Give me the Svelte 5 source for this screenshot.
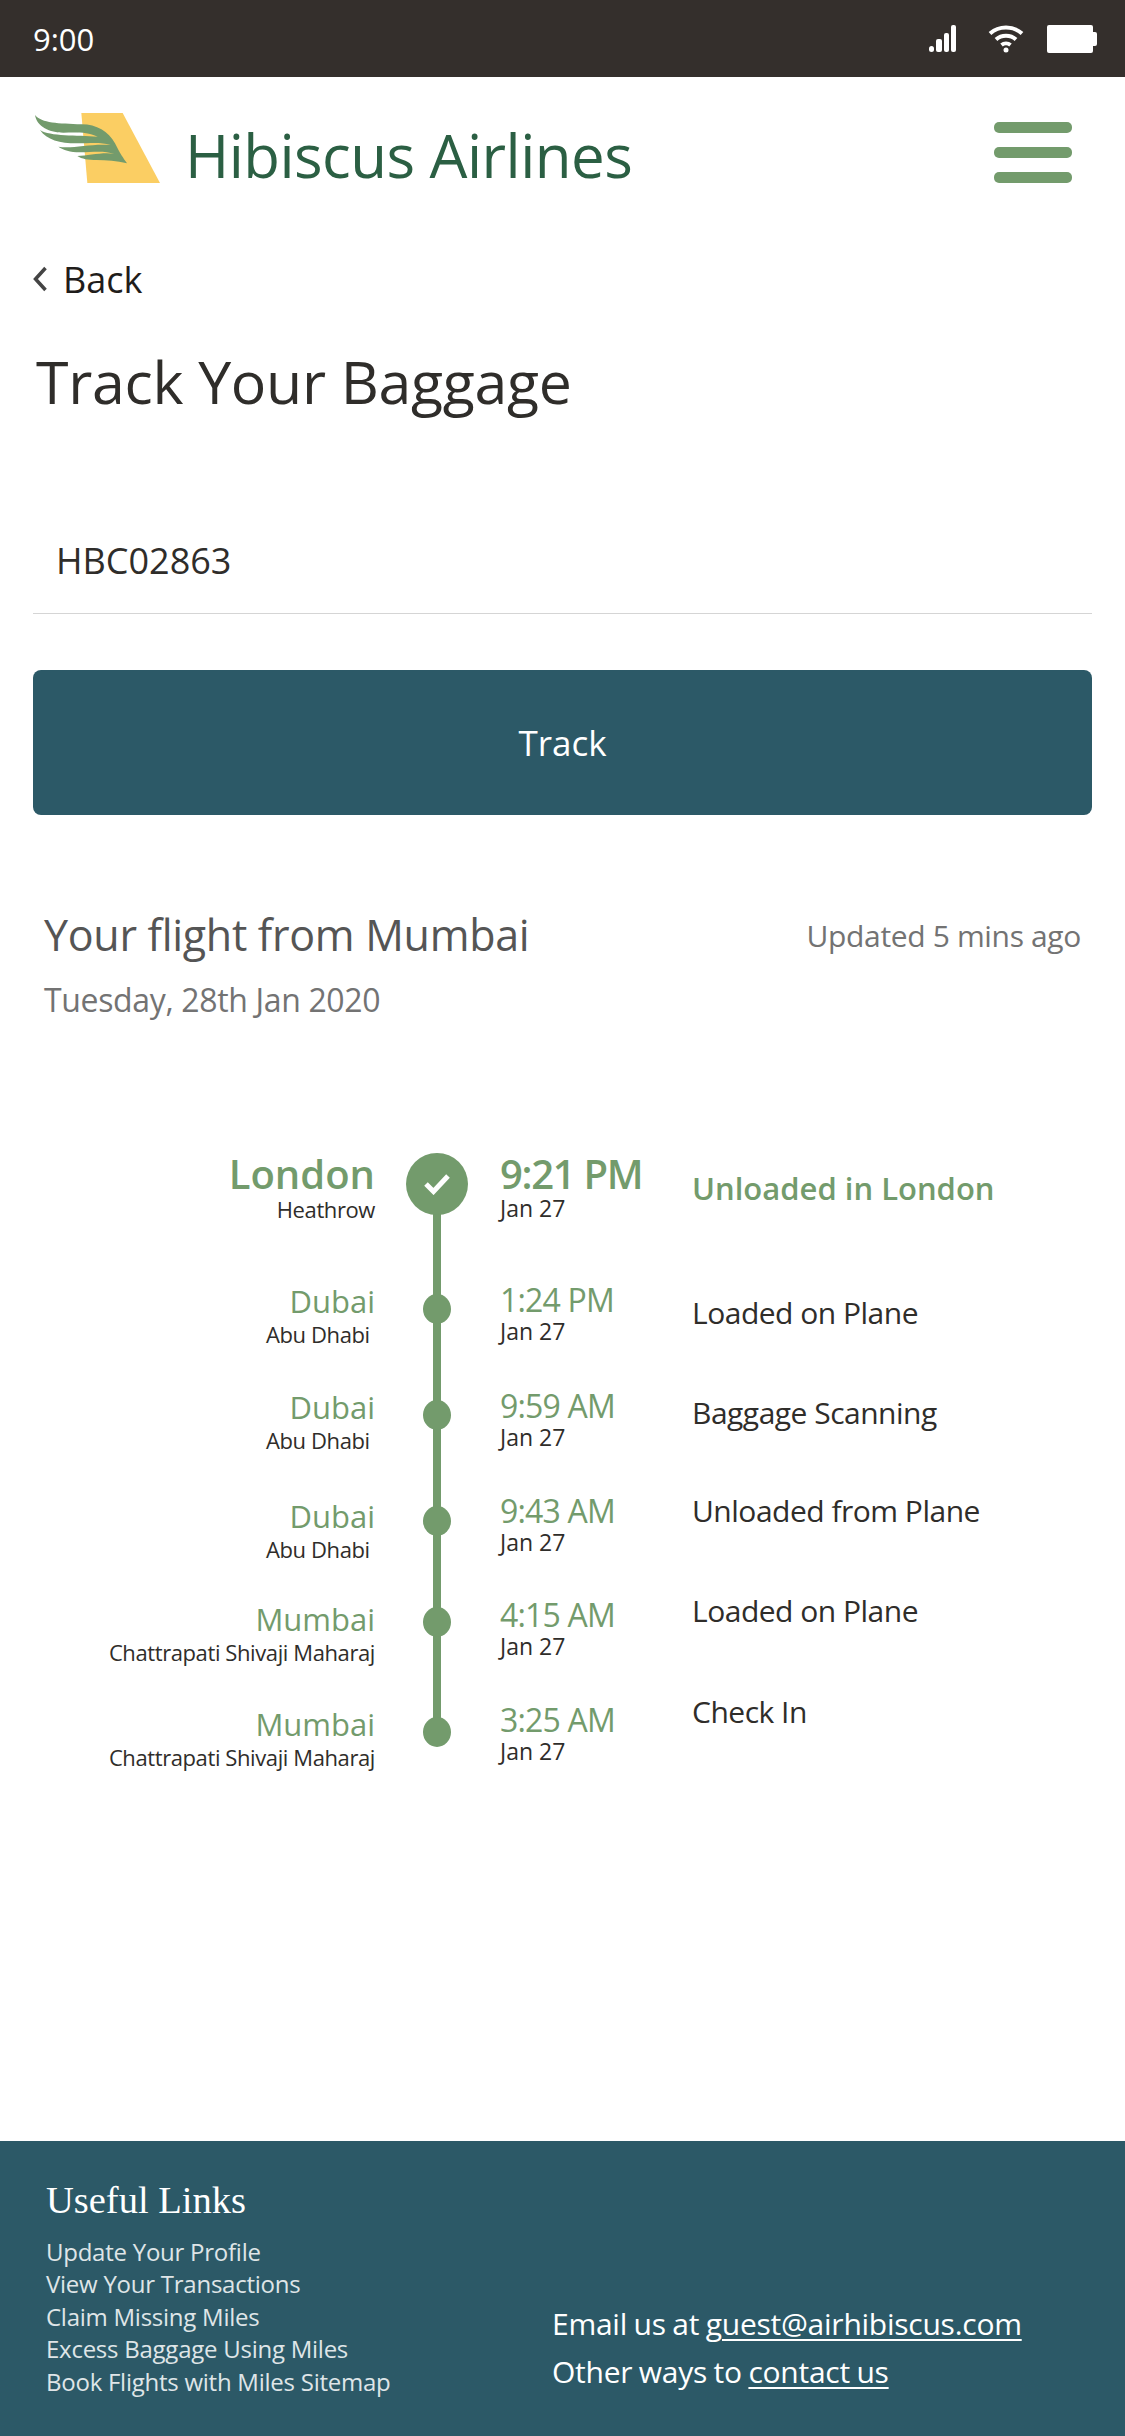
<script>
	const events = [
		{ city: 'London', place: 'Heathrow', time: '9:21 PM', date: 'Jan 27', status: 'Unloaded in London', current: true, height: 126, cityTop: 0, timeTop: 0, statusTop: 16 },
		{ city: 'Dubai', place: 'Abu Dhabi\u00a0', time: '1:24 PM', date: 'Jan 27', status: 'Loaded on Plane', height: 106, cityTop: 3, timeTop: 3, statusTop: 15 },
		{ city: 'Dubai', place: 'Abu Dhabi\u00a0', time: '9:59 AM', date: 'Jan 27', status: 'Baggage Scanning', height: 106, cityTop: 3, timeTop: 3, statusTop: 9 },
		{ city: 'Dubai', place: 'Abu Dhabi\u00a0', time: '9:43 AM', date: 'Jan 27', status: 'Unloaded from Plane', height: 101, cityTop: 6, timeTop: 2, statusTop: 1 },
		{ city: 'Mumbai', place: 'Chattrapati Shivaji Maharaj', time: '4:15 AM', date: 'Jan 27', status: 'Loaded on Plane', height: 110, cityTop: 8, timeTop: 5, statusTop: 0 },
		{ city: 'Mumbai', place: 'Chattrapati Shivaji Maharaj', time: '3:25 AM', date: 'Jan 27', status: 'Check In', height: 106, cityTop: 3, timeTop: 0, statusTop: -9 }
	];

	const links = [
		'Update Your Profile',
		'View Your Transactions',
		'Claim Missing Miles',
		'Excess Baggage Using Miles',
		'Book Flights with Miles Sitemap'
	];
</script>

<div class="page">
	<div class="statusbar">
		<span class="clock">9:00</span>
		<div class="status-icons">
			<svg width="28" height="28" viewBox="0 0 28 28" fill="#fff">
				<rect x="0" y="21" width="5" height="6" rx="2.5" />
				<rect x="7" y="14" width="6" height="13" rx="2" />
				<rect x="15" y="8" width="5" height="19" rx="2" />
				<rect x="22" y="0" width="5" height="27" rx="2" />
			</svg>
			<svg width="36" height="28" viewBox="0 0 36 28" fill="none" stroke="#fff" stroke-width="4">
				<path d="M2 8.500C11 0.500 25 0.500 34 8.500" />
				<path d="M8 14.500C13.500 9.500 22.500 9.500 28 14.500" />
				<path d="M13.500 20C16 18 20 18 22.500 20" />
				<circle cx="18" cy="25" r="2.500" fill="#fff" stroke="none" />
			</svg>
			<svg width="50" height="28" viewBox="0 0 50 28" fill="#fff">
				<rect x="0" y="0" width="46" height="28" rx="2" />
				<rect x="44" y="7" width="6" height="14" rx="2" />
			</svg>
		</div>
	</div>

	<header class="topbar">
		<div class="brand">
			<svg class="logo" width="126" height="70" viewBox="105 69 378 210">
				<path d="M244 69H368L480 279H262Z" fill="#fbce63" />
				<path
					fill="#739b6c"
					d="M105 75C125 100 175 100 245 103C290 103 325 125 345 160C360 190 370 205 381 220C350 212 320 210 290 210C265 210 245 207 232 198C265 198 310 185 343 192C310 180 275 187 240 187C210 187 190 180 175 170C215 178 270 160 332 165C300 155 270 160 230 160C180 160 140 150 120 120C150 140 230 135 293 140C260 125 230 128 190 128C150 128 110 110 105 75Z"
				/>
			</svg>
			<span class="brand-name">Hibiscus Airlines</span>
		</div>
		<div class="menu">
			<span></span>
			<span></span>
			<span></span>
		</div>
	</header>

	<main>
		<div class="back">
			<svg width="14" height="26" viewBox="0 0 14 26" fill="none" stroke="#444" stroke-width="3.500">
				<path d="M12.500 2L2.500 13L12.500 24" />
			</svg>
			<span>Back</span>
		</div>
		<h1>Track Your Baggage</h1>

		<div class="field">HBC02863</div>
		<button class="track">Track</button>

		<section class="flight">
			<div class="flight-head">
				<h2>Your flight from Mumbai</h2>
				<span class="updated">Updated 5 mins ago</span>
			</div>
			<div class="flight-date">Tuesday, 28th Jan 2020</div>
		</section>

		<div class="timeline">
			<div class="rail"></div>
			{#each events as e}
				<div class="row" class:current={e.current} style="height: {e.height}px">
					<div class="where" style="padding-top: {e.cityTop}px">
						<div class="city">{e.city}</div>
						<div class="sub">{e.place}</div>
					</div>
					<div class="node">
						{#if e.current}
							<div class="big-dot">
								<svg width="26" height="22" viewBox="0 0 26 22" fill="none" stroke="#fff" stroke-width="5">
									<path d="M2 11L9.500 18.500L24 3" />
								</svg>
							</div>
						{:else}
							<div class="dot"></div>
						{/if}
					</div>
					<div class="when" style="padding-top: {e.timeTop}px">
						<div class="time">{e.time}</div>
						<div class="date">{e.date}</div>
					</div>
					<div class="status" style="margin-top: {e.statusTop}px">{e.status}</div>
				</div>
			{/each}
		</div>
	</main>

	<footer>
		<div class="useful">
			<h3>Useful Links</h3>
			{#each links as link}
				<div class="link">{link}</div>
			{/each}
		</div>
		<div class="contact">
			<div>Email us at <u>guest@airhibiscus.com</u></div>
			<div>Other ways to <u>contact us</u></div>
		</div>
	</footer>
</div>

<style>
	:global(body) {
		margin: 0;
		background: #fff;
	}

	.page {
		width: 1125px;
		height: 2436px;
		display: flex;
		flex-direction: column;
		font-family: 'Open Sans', sans-serif;
		color: #2f2d2a;
	}

	.statusbar {
		height: 77px;
		flex: none;
		background: #342f2c;
		display: flex;
		justify-content: space-between;
		align-items: center;
		padding: 0 28px 0 33px;
		box-sizing: border-box;
		color: #fff;
	}

	.clock {
		font-size: 31px;
	}

	.status-icons {
		display: flex;
		align-items: center;
		gap: 23px;
		margin-top: 1px;
	}

	.status-icons svg:first-child {
		margin-right: 8px;
	}

	.topbar {
		display: flex;
		justify-content: space-between;
		align-items: flex-start;
		padding: 36px 53px 0 35px;
		height: 115px;
		flex: none;
		box-sizing: border-box;
	}

	.brand {
		display: flex;
		align-items: flex-start;
		gap: 24px;
	}

	.brand-name {
		font-size: 60px;
		line-height: 84px;
		letter-spacing: -0.55px;
		color: #2b5f43;
	}

	.menu {
		display: flex;
		flex-direction: column;
		gap: 14px;
		padding-top: 9px;
	}

	.menu span {
		display: block;
		width: 78px;
		height: 11px;
		border-radius: 5px;
		background: #739b6c;
	}

	main {
		flex: 1;
		padding: 0 33px;
	}

	.back {
		display: flex;
		align-items: center;
		gap: 16px;
		font-size: 36px;
		margin-top: 61px;
		height: 52px;
	}

	.back span {
		color: #1f1d1b;
	}

	h1 {
		margin: 36px 0 0 3px;
		font-size: 59px;
		line-height: 80px;
		font-weight: 400;
		letter-spacing: -0.3px;
	}

	.field {
		margin-top: 115px;
		height: 77px;
		padding-left: 23px;
		font-size: 36px;
		line-height: 50px;
		border-bottom: 1px solid #d5d5d5;
	}

	.track {
		display: block;
		width: 100%;
		height: 145px;
		margin-top: 56px;
		border: none;
		border-radius: 8px;
		background: #2c5967;
		color: #fff;
		font-family: inherit;
		font-size: 35px;
	}

	.flight {
		padding: 0 11px;
		margin-top: 90px;
	}

	.flight-head {
		display: flex;
		justify-content: space-between;
		align-items: center;
	}

	h2 {
		margin: 0;
		font-size: 43px;
		line-height: 60px;
		font-weight: 400;
		letter-spacing: -0.3px;
		color: #555;
	}

	.updated {
		font-size: 30px;
		letter-spacing: -0.35px;
		color: #737373;
	}

	.flight-date {
		margin-top: 13px;
		font-size: 32px;
		line-height: 44px;
		letter-spacing: -0.35px;
		color: #737373;
	}

	.timeline {
		position: relative;
		margin-top: 130px;
		margin-left: -33px;
	}

	.rail {
		position: absolute;
		left: 433px;
		top: 40px;
		height: 540px;
		width: 8px;
		background: #739b6c;
	}

	.row {
		position: relative;
		display: grid;
		grid-template-columns: 375px 125px 192px 1fr;
	}

	.where {
		text-align: right;
	}

	.city {
		font-size: 31px;
		line-height: 40px;
		color: #739b6c;
	}

	.sub {
		font-size: 22px;
		line-height: 26px;
		letter-spacing: -0.4px;
		color: #2f2d2a;
	}

	.node {
		display: flex;
		justify-content: center;
		margin-left: -1px;
		padding-top: 16px;
	}

	.dot {
		width: 28px;
		height: 30px;
		border-radius: 50%;
		background: #739b6c;
	}

	.big-dot {
		width: 62px;
		height: 62px;
		border-radius: 50%;
		background: #739b6c;
		display: flex;
		align-items: center;
		justify-content: center;
		margin-top: -15px;
	}

	.time {
		font-size: 32px;
		line-height: 38px;
		letter-spacing: -0.8px;
		color: #739b6c;
	}

	.date {
		font-size: 23px;
		line-height: 25px;
	}

	.status {
		font-size: 30px;
		line-height: 40px;
		letter-spacing: -0.5px;
	}

	.current .city,
	.current .time {
		font-size: 40px;
		line-height: 44px;
		font-weight: 600;
	}

	.current .time {
		letter-spacing: -1.300px;
	}

	.current .sub,
	.current .date {
		font-weight: 500;
	}

	.current .status {
		font-size: 31px;
		letter-spacing: 0;
		color: #739b6c;
		font-weight: 600;
	}

	footer {
		flex: none;
		height: 295px;
		box-sizing: border-box;
		background: #2c5967;
		padding: 36px 45px 0 46px;
		display: flex;
		justify-content: space-between;
		color: #fff;
	}

	h3 {
		margin: 0 0 13px;
		font-family: 'Liberation Serif', serif;
		font-size: 38.500px;
		line-height: 46px;
		font-weight: 400;
	}

	.link {
		font-size: 24px;
		line-height: 32.400px;
		letter-spacing: -0.25px;
		color: #dfe5e7;
	}

	.contact {
		padding-top: 123px;
		width: 528px;
		font-size: 30px;
		line-height: 48px;
		letter-spacing: -0.25px;
		word-spacing: -1px;
	}

	.contact u {
		text-underline-offset: 4px;
		text-decoration-thickness: 2px;
	}
</style>
